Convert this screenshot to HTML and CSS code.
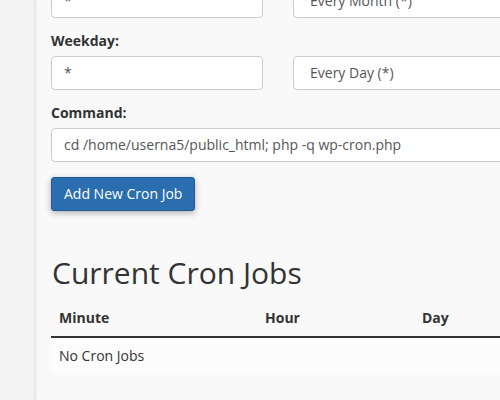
FILE: index.html
```html
<!DOCTYPE html>
<html>
<head>
<meta charset="utf-8">
<link rel="stylesheet" href="styles.css">
</head>
<body>
<div class="sidebar"></div>
<main class="main">
  <div class="form-group first">
    <div class="pair">
      <div class="input short">*</div>
      <div class="input select">Every Month (*)</div>
    </div>
  </div>
  <div class="form-group">
    <label class="label">Weekday:</label>
    <div class="pair">
      <div class="input short">*</div>
      <div class="input select">Every Day (*)</div>
    </div>
  </div>
  <div class="form-group">
    <label class="label">Command:</label>
    <div class="input wide">cd /home/userna5/public_html; php -q wp-cron.php</div>
  </div>
  <button class="btn">Add New Cron Job</button>
  <h2 class="title">Current Cron Jobs</h2>
  <table class="table">
    <thead>
      <tr><th class="c1">Minute</th><th class="c2">Hour</th><th class="c3">Day</th></tr>
    </thead>
    <tbody>
      <tr><td colspan="3">No Cron Jobs</td></tr>
    </tbody>
  </table>
</main>
</body>
</html>
```
FILE: styles.css
```css
html, body { margin: 0; padding: 0; height: 100%; overflow: hidden; }
body {
  display: flex;
  background: #f9f9f9;
  font-family: "Open Sans", "Liberation Sans", sans-serif;
  font-size: 14px;
  line-height: 20px;
  color: #333;
}
.sidebar {
  flex: 0 0 34px;
  background: #f3f3f3;
  border-right: 1px solid #e2e2e2;
  box-shadow: 1px 0 3px rgba(0,0,0,0.08);
  height: 100%;
}
.main {
  flex: 1 0 auto;
  padding-left: 16px;
  min-width: 0;
}
.form-group { margin-bottom: 13px; }
.form-group.first { margin-top: -16px; }
.label {
  display: block;
  font-weight: 700;
  margin-bottom: 5px;
}
.pair { display: flex; gap: 30px; }
.input {
  box-sizing: border-box;
  height: 34px;
  background: #fff;
  border: 1px solid #ccc;
  border-radius: 4px;
  padding: 6px 12px;
  color: #555;
  white-space: nowrap;
}
.short { width: 212px; flex: 0 0 212px; }
.select { width: 300px; flex: 0 0 300px; padding-left: 16px; }
.wide { width: 520px; }
.btn {
  display: inline-block;
  box-sizing: border-box;
  height: 34px;
  margin-top: 2px;
  padding: 6px 12px;
  background: #2a6eb0;
  color: #fff;
  border: 1px solid #1f5d99;
  border-radius: 3px;
  font: inherit;
  white-space: nowrap;
  box-shadow: 0 2px 6px rgba(0,0,0,0.3);
}
.title {
  margin: 45px 0 11px 1px;
  font-size: 30px;
  line-height: 33px;
  font-weight: 400;
  color: #333;
}
.table {
  border-collapse: collapse;
  width: 620px;
}
.table th {
  text-align: left;
  font-weight: 700;
  padding: 8px;
  border-bottom: 2px solid #333;
}
.c1 { width: 190px; }
.c2 { width: 141px; }
.table td {
  padding: 8px;
  background: #fcfcfc;
}
```
